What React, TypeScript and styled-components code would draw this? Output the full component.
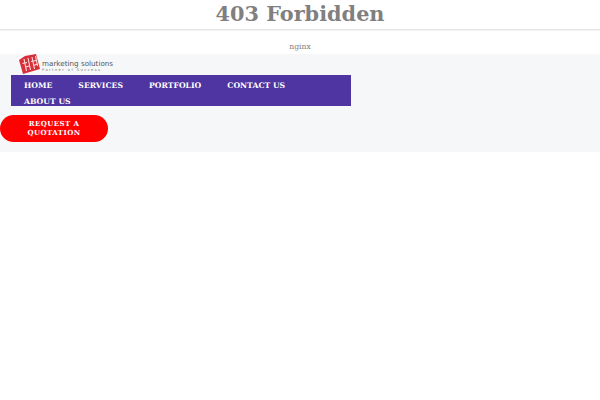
import React from "react";
import styled, { createGlobalStyle } from "styled-components";

const GlobalStyle = createGlobalStyle`
  html, body {
    margin: 0;
    padding: 0;
    background: #fff;
    font-family: "DejaVu Serif", serif;
  }
`;

const ErrorTitle = styled.h1`
  margin: 0;
  height: 29px;
  font-size: 20.8px;
  line-height: 28px;
  font-weight: 700;
  color: #808080;
  text-align: center;
`;

const Rule = styled.hr`
  margin: 0;
  border: 0;
  border-top: 1px solid #e4e4e4;
  border-bottom: 1px solid #f4f4f4;
`;

const ServerName = styled.div`
  height: 23px;
  padding-top: 10px;
  box-sizing: border-box;
  font-size: 7.6px;
  line-height: 12px;
  color: #808080;
  text-align: center;
`;

const Panel = styled.div`
  height: 98px;
  background: #f6f7f9;
`;

const LogoRow = styled.div`
  height: 21px;
  padding-left: 19px;
  display: flex;
  align-items: flex-start;
  gap: 2px;
`;

const LogoText = styled.div`
  padding-top: 6px;
  font-family: "DejaVu Sans", sans-serif;
`;

const LogoName = styled.div`
  font-size: 7.2px;
  line-height: 8px;
  color: #555;
`;

const LogoTag = styled.div`
  font-size: 3.6px;
  line-height: 5px;
  letter-spacing: 1.45px;
  color: #777;
`;

const Nav = styled.nav`
  width: 339.5px;
  height: 31px;
  margin-left: 11px;
  padding: 3px 13px 0;
  box-sizing: border-box;
  background: #4e35a1;
  display: flex;
  flex-wrap: wrap;
  column-gap: 26px;
  align-content: flex-start;
`;

const NavLink = styled.a`
  font-size: 7.7px;
  line-height: 15.5px;
  font-weight: 700;
  color: #fff;
  white-space: nowrap;
`;

const QuoteButton = styled.button`
  display: block;
  width: 108px;
  height: 27px;
  margin-top: 9px;
  padding: 0 20px;
  border: 0;
  border-radius: 14px;
  background: #fe0000;
  color: #fff;
  font-family: inherit;
  font-size: 7px;
  line-height: 8.5px;
  font-weight: 700;
  letter-spacing: 0.42px;
  text-align: center;
`;

const Logo = () => (
  <svg width="21" height="20" viewBox="0 0 21 20">
    <path d="M0 6 L6 2 L17 0 L21 15 L4 20 Z" fill="#d8303a" />
    <g stroke="#f8dcdc" strokeWidth="1.1" fill="none">
      <path d="M5 5 L7.500 17 M9 4 L11.500 16 M13 3 L15.500 15 M16.500 2 L18.500 12" />
      <path d="M3.500 9.500 L8 8.500 M12 7.500 L17 6.500 M6.500 13 L10.500 12 M14 11.500 L19 10" />
    </g>
  </svg>
);

const links = ["HOME", "SERVICES", "PORTFOLIO", "CONTACT US", "ABOUT US"];

export default function App() {
  return (
    <>
      <GlobalStyle />
      <ErrorTitle>403 Forbidden</ErrorTitle>
      <Rule />
      <ServerName>nginx</ServerName>
      <Panel>
        <LogoRow>
          <Logo />
          <LogoText>
            <LogoName>marketing solutions</LogoName>
            <LogoTag>Partner of Success</LogoTag>
          </LogoText>
        </LogoRow>
        <Nav>
          {links.map((label) => (
            <NavLink key={label}>{label}</NavLink>
          ))}
        </Nav>
        <QuoteButton>REQUEST A QUOTATION</QuoteButton>
      </Panel>
    </>
  );
}
